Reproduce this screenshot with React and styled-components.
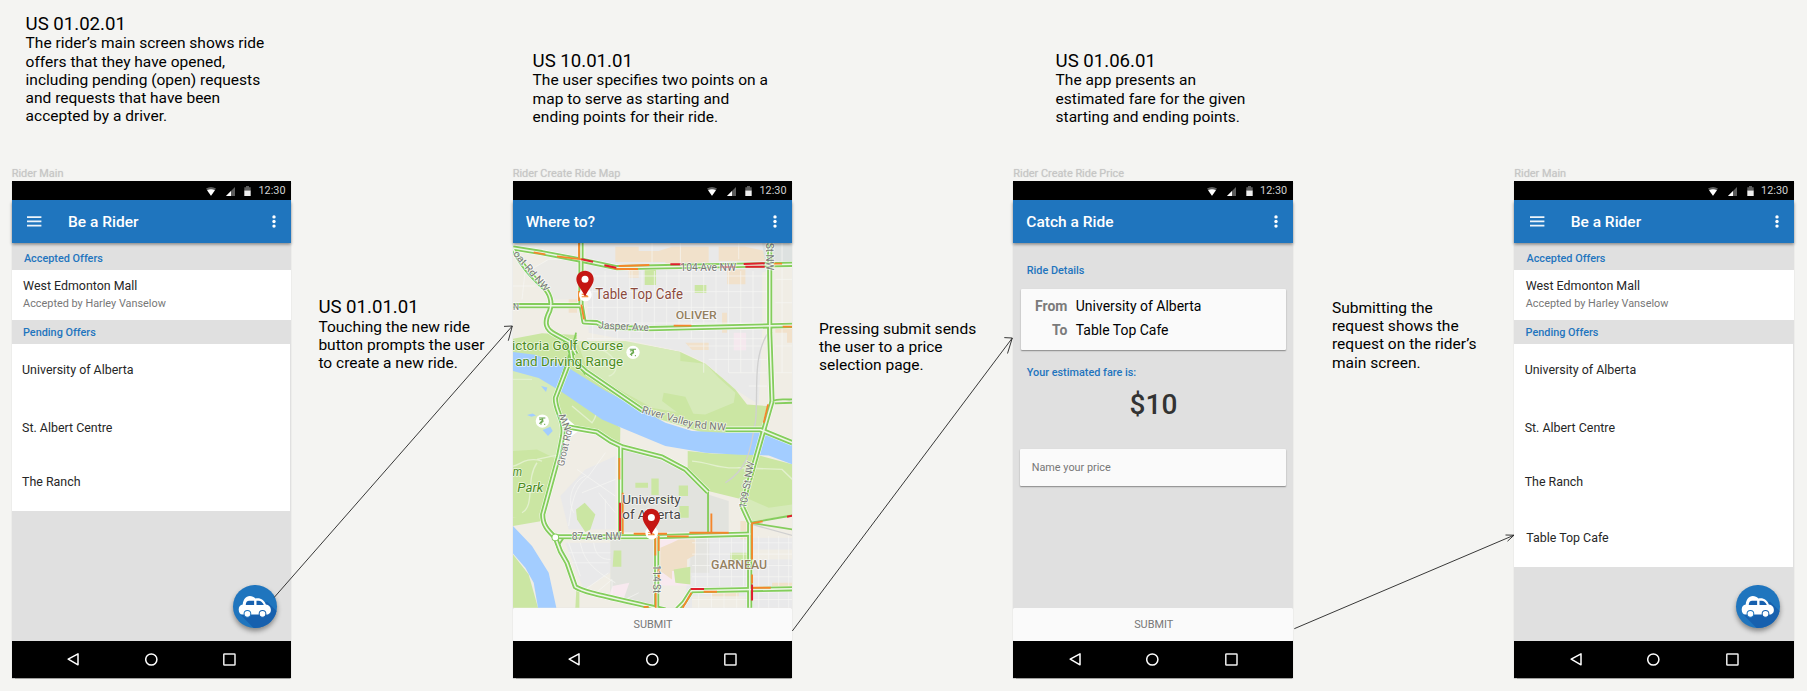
import React from "react";
import styled, { createGlobalStyle } from "styled-components";

const blue = "#1f75be";

const GlobalStyle = createGlobalStyle`
  * { box-sizing: border-box; }
  html, body { margin: 0; padding: 0; background: #f4f4f2; overflow: hidden; }
  body { font-family: Roboto, "Liberation Sans", sans-serif; }
  svg { display: block; }
`;

const Canvas = styled.main`
  position: relative;
  width: 1807px;
  height: 691px;
  overflow: hidden;
  background: #f4f4f2;
`;

/* Annotations and artboards are free items on the canvas. */
const NoteBox = styled.section`
  position: absolute;
  left: ${(p) => p.$x}px;
  top: ${(p) => p.$y}px;
  color: #000;
  font-size: 15.52px;
  line-height: 18.2px;
  white-space: pre;
`;

const NoteTitle = styled.h2`
  margin: 0;
  padding-top: 1px;
  height: 21.8px;
  font-size: 18.62px;
  font-weight: 400;
  line-height: 21.8px;
`;

const NoteText = styled.p`
  margin: 0;
`;

const Artboard = styled.article`
  position: absolute;
  left: ${(p) => p.$x}px;
  top: 167px;
  width: 279.4px;
`;

const ArtboardName = styled.div`
  height: 14.2px;
  line-height: 14px;
  font-size: 10.9px;
  color: #c6c6c5;
  white-space: nowrap;
  text-shadow: 0 0 1px rgba(190, 190, 190, 0.6);
`;

const Screen = styled.div`
  display: flex;
  flex-direction: column;
  height: 496.8px;
  background: #e0e0e0;
  box-shadow: 0 0.5px 1px rgba(0, 0, 0, 0.35);
`;

const StatusBar = styled.div`
  display: flex;
  align-items: center;
  justify-content: flex-end;
  flex: none;
  height: 18.7px;
  padding-top: 1.2px;
  padding-right: 5.6px;
  background: #000;
  color: #d2d2d2;
  font-size: 10.86px;
  line-height: 18.7px;
`;

const StatusIcons = styled.div`
  display: flex;
  align-items: center;
  gap: 9.8px;
  margin-right: 7px;
`;

const AppBar = styled.header`
  position: relative;
  z-index: 1;
  display: flex;
  align-items: center;
  flex: none;
  height: 43.5px;
  padding: 0 15.1px 0 ${(p) => (p.$menu ? "15.8px" : "13px")};
  background: ${blue};
  box-shadow: 0 1.5px 3px rgba(0, 0, 0, 0.4);
  color: #fff;
`;

const Title = styled.h1`
  flex: 1;
  margin: 0 0 0 ${(p) => (p.$menu ? "25.6px" : "0")};
  font-size: 15.52px;
  font-weight: 500;
  line-height: 20px;
`;

const Content = styled.div`
  position: relative;
  flex: 1;
  min-height: 0;
`;

const ListHeader = styled.h3`
  margin: 0;
  height: ${(p) => p.$h}px;
  padding: ${(p) => p.$top}px 0 0 ${(p) => p.$left}px;
  color: ${blue};
  font-size: 10.86px;
  font-weight: 500;
  line-height: 14px;
`;

const OfferCard = styled.div`
  height: 50px;
  padding: 8.6px 11.4px 0;
  background: #fff;
`;

const OfferName = styled.div`
  color: #262626;
  font-size: 12.42px;
  line-height: 16px;
`;

const OfferStatus = styled.div`
  margin-top: 1.4px;
  color: #777;
  font-size: 10.86px;
  line-height: 15px;
`;

const PendingList = styled.div`
  width: 278.4px;
  height: ${(p) => p.$h}px;
  padding-top: 18.2px;
  background: #fff;
`;

const PendingRow = styled.div`
  height: ${(p) => p.$h}px;
  padding-left: ${(p) => p.$left || 10.4}px;
  color: #262626;
  font-size: 12.42px;
  line-height: 16px;
`;

const Fab = styled.button`
  position: absolute;
  right: 14px;
  bottom: 12.4px;
  width: 43.6px;
  height: 43.6px;
  padding: 0;
  border: 0;
  border-radius: 50%;
  overflow: visible;
  background: ${blue};
  box-shadow: 0 3px 5px rgba(0, 0, 0, 0.4);

  svg { border-radius: 50%; }
`;

const SubmitBar = styled.button`
  flex: none;
  height: 32.5px;
  padding: 1px 0 0 1.4px;
  border: 0;
  border-radius: 1.5px;
  background: #fafafa;
  color: #777;
  font-family: inherit;
  font-size: 10.86px;
`;

const NavBar = styled.nav`
  display: flex;
  align-items: center;
  flex: none;
  gap: 65.2px;
  height: 37.3px;
  padding-left: 55.4px;
  background: #000;
`;

const SectionLabel = styled.h3`
  margin: 0;
  padding: ${(p) => p.$top}px 0 0 13.4px;
  color: ${blue};
  font-size: 10.86px;
  font-weight: 500;
  line-height: 14px;
`;

const RideCard = styled.dl`
  display: grid;
  grid-template-columns: 46.8px 1fr;
  grid-auto-rows: 23.6px;
  column-gap: 8.3px;
  width: 265.7px;
  height: 60.3px;
  margin: 11.4px 0 0 7.4px;
  padding-top: 5px;
  border-radius: 1px;
  background: #fafafa;
  box-shadow: 0 1px 1.5px rgba(0, 0, 0, 0.4);
  font-size: 13.97px;
  line-height: 24px;
`;

const RideKey = styled.dt`
  color: #7b7b7b;
  font-weight: 700;
  text-align: right;
`;

const RideValue = styled.dd`
  margin: 0;
  color: #000;
`;

const Fare = styled.div`
  margin-top: 7.8px;
  padding-left: 1px;
  color: #333;
  font-size: 28px;
  font-weight: 500;
  line-height: 34px;
  text-align: center;
`;

const PriceField = styled.div`
  width: 266px;
  height: 37px;
  margin: 27px 0 0 6.8px;
  padding-left: 11.6px;
  border-radius: 1px;
  background: #fafafa;
  box-shadow: 0 1px 1.5px rgba(0, 0, 0, 0.4);
  color: #777;
  font-size: 10.86px;
  line-height: 37px;
`;

const Arrows = styled.svg`
  position: absolute;
  inset: 0;
  pointer-events: none;
`;

const Note = ({ x, y, title, children }) => (
  <NoteBox $x={x} $y={y}>
    {title && <NoteTitle>{title}</NoteTitle>}
    <NoteText>{children}</NoteText>
  </NoteBox>
);

const WifiIcon = () => (
  <svg width="10" height="9" viewBox="0 0 10 9">
    <path d="M0 1.6Q5-1.4 10 1.6L5 8.8Z" fill="#5c5c5c" />
    <path d="M1.1 3.2Q5 1.2 8.9 3.2L5 8.8Z" fill="#fff" />
  </svg>
);

const SignalIcon = () => (
  <svg width="9" height="9" viewBox="0 0 9 9">
    <path d="M0 9 9 0V9Z" fill="#5c5c5c" />
    <path d="M0 9 5 4V9Z" fill="#fff" />
  </svg>
);

const BatteryIcon = () => (
  <svg width="7" height="10" viewBox="0 0 7 10">
    <path d="M0.3 1.2H2V0H5V1.2H6.7V5H0.3Z" fill="#5c5c5c" />
    <path d="M0.3 4.6H6.7V10H0.3Z" fill="#eee" />
  </svg>
);

const MenuIcon = () => (
  <svg width="15" height="11" viewBox="0 0 15 11">
    <path d="M0 1.1H14.4M0 5.4H14.4M0 9.7H14.4" stroke="#fff" strokeOpacity="0.92" strokeWidth="1.8" />
  </svg>
);

const MoreIcon = () => (
  <svg width="4" height="13" viewBox="0 0 4 13">
    <circle cx="2" cy="1.9" r="1.7" fill="#fff" />
    <circle cx="2" cy="6.5" r="1.7" fill="#fff" />
    <circle cx="2" cy="11.1" r="1.7" fill="#fff" />
  </svg>
);

const CarIcon = () => (
  <svg width="43.6" height="43.6" viewBox="0 0 130 130">
    <path d="M24 90 102 50 190 138 102 170Z" fill="#1760ae" />
    <path
      d="M17 73C17 64 22 59 29 58C30 45 38 33 50 33C57 33 63 36 67 40C82 37 94 45 98 58C107 59 113 65 113 74C113 84 107 88 101 88H29C21 88 17 82 17 73Z"
      fill="#fff"
    />
    <path d="M38 60C38 51 42 47 48 47H63V60Z" fill="#1760ae" />
    <path d="M70 47H76C84 47 88 52 92 60H70Z" fill="#1760ae" />
    <circle cx="43" cy="86" r="10" fill="#fff" stroke={blue} strokeWidth="3" />
    <circle cx="88" cy="86" r="10" fill="#fff" stroke="#1760ae" strokeWidth="3" />
  </svg>
);

const PhoneFrame = ({ x, name, title, menu, submit, children }) => (
  <Artboard $x={x}>
    <ArtboardName>{name}</ArtboardName>
    <Screen>
      <StatusBar>
        <StatusIcons>
          <WifiIcon />
          <SignalIcon />
          <BatteryIcon />
        </StatusIcons>
        12:30
      </StatusBar>
      <AppBar $menu={menu}>
        {menu && <MenuIcon />}
        <Title $menu={menu}>{title}</Title>
        <MoreIcon />
      </AppBar>
      <Content>{children}</Content>
      {submit && <SubmitBar>SUBMIT</SubmitBar>}
      <NavBar>
        <svg width="12.5" height="13" viewBox="0 0 12.5 13">
          <path d="M1.2 6.2 11 0.8V11.8Z" fill="none" stroke="#fff" strokeWidth="1.5" strokeLinejoin="round" />
        </svg>
        <svg width="13" height="13" viewBox="0 0 13 13">
          <circle cx="6.3" cy="6.5" r="5.6" fill="none" stroke="#fff" strokeWidth="1.5" />
        </svg>
        <svg width="13" height="13" viewBox="0 0 13 13">
          <rect x="0.8" y="0.9" width="11.2" height="11.2" rx="0.6" fill="none" stroke="#eee" strokeWidth="1.5" />
        </svg>
      </NavBar>
    </Screen>
  </Artboard>
);

const RiderMain = ({ x, offers, listHeight }) => (
  <PhoneFrame x={x} name="Rider Main" title="Be a Rider" menu>
    <ListHeader $h={26.5} $top={8.8} $left={12.2}>Accepted Offers</ListHeader>
    <OfferCard>
      <OfferName>West Edmonton Mall</OfferName>
      <OfferStatus>Accepted by Harley Vanselow</OfferStatus>
    </OfferCard>
    <ListHeader $h={23.7} $top={6} $left={11.3}>Pending Offers</ListHeader>
    <PendingList $h={listHeight}>
      {offers.map(([label, h, left]) => (
        <PendingRow key={label} $h={h} $left={left}>{label}</PendingRow>
      ))}
    </PendingList>
    <Fab aria-label="New ride"><CarIcon /></Fab>
  </PhoneFrame>
);

/* ---- Map drawing ---- */

const green = "#84cd5c";
const orange = "#f5862b";
const red = "#e01f2d";

const roads = [
  "M23 266 L110 280 230 303 335 325 480 322 861 315",
  "M227 251 V435 L236 488 275 490 300 503 430 508 861 498",
  "M23 439 H232",
  "M23 268 C50 320 80 350 110 380 C135 400 142 430 133 455 C115 490 120 510 150 525 L192 548 212 585",
  "M793 251 L793 520 800 726",
  "M192 548 L200 600 240 635 415 755",
  "M187 620 L150 716 C150 760 180 780 172 830 L160 890 112 1065 C112 1100 130 1115 150 1135 L165 1175 185 1210 210 1282 C240 1300 300 1310 440 1343 L480 1352",
  "M172 800 L240 812 275 818 315 845 350 862 470 893 540 930 608 998",
  "M660 811 H765 L861 850",
  "M346 860 V1125",
  "M150 1132 H440 L735 1124",
  "M800 726 L790 760 710 1040 735 1094",
  "M733 1094 V1345",
  "M454 1130 V1345",
  "M515 1350 L535 1330 558 1294 861 1288",
];

const thinRoads = [
  "M608 998 V1122", "M735 1090 L861 1068", "M735 1090 L861 1110",
  "M800 726 C820 715 840 722 861 720", "M808 732 L861 730",
  "M172 535 C190 590 215 610 240 645", "M212 520 C205 560 190 575 160 690",
  "M155 1165 L175 1135", "M160 890 L175 830",
];

const orangeJams = [
  "M85 279 L120 285", "M155 291 L230 300", "M300 318 L335 329 H398", "M340 320 L432 317",
  "M221 251 V296", "M228 436 L236 480", "M505 499 H558", "M805 313 H830", "M832 502 H861",
  "M788 735 L775 790", "M342 896 V960", "M352 1000 V1124", "M385 1123 H485", "M485 1131 H550",
  "M552 1120 H670", "M618 1062 V1122", "M738 1092 L772 1086", "M740 1092 V1200",
  "M450 1130 V1188", "M460 1130 V1175", "M460 1225 V1260", "M451 1300 V1345", "M532 1345 L558 1300",
  "M595 1297 H635", "M742 1285 H796", "M221 395 V425", "M740 1245 V1272", "M415 1342 H430",
];

const redJams = [
  "M228 300 L263 307", "M297 318 L333 325", "M495 315 H535", "M645 323 H690", "M715 314 L778 312",
  "M720 322 H778", "M344 1030 V1115", "M845 1072 L861 1069", "M556 1289 H596", "M740 1275 V1323",
];

const range = (from, to, step) => {
  const out = [];
  for (let v = from; v < to; v += step) out.push(v);
  return out;
};

const upperGrid = [
  ...range(262, 770, 37).map((x) => `M${x} 335V${x > 560 ? 640 : 540}`),
  ...range(350, 560, 47).map((y) => `M245 ${y}H785`),
  ...range(560, 700, 40).map((y) => `M${520 + (y - 540) * 1.5} ${y}H785`),
  "M525 251V320", "M440 251V310", "M380 335V490", "M700 251V300", "M830 251V640", "M810 360H861",
  "M810 430H861", "M810 560H861", "M810 640H861", "M60 330L50 420", "M23 380H90", "M60 340L130 300H215",
].join("");

const lowerGrid = [
  ...range(570, 725, 36).map((x) => `M${x} 1135V1280`),
  ...range(760, 861, 30).map((x) => `M${x} 1130V1345`),
  ...range(580, 725, 38).map((x) => `M${x} 1300V1345`),
  ...range(1150, 1340, 34).map((y) => `M560 ${y}H861`),
  "M190 1100C200 1020 210 980 250 950L300 880M230 1000L330 960M215 930L330 1010M205 1060C180 1010 210 960 240 950",
  "M190 1150L225 1250M225 1150C235 1200 260 1230 330 1270M265 1150C270 1190 290 1200 315 1200M190 1180H315M200 1210H310",
  "M300 1020V1110M280 1000L330 1060M240 1290L310 1240M260 1310L320 1260V1310M340 1330L400 1300",
].join("");

const MapText = ({ x, y, w, size, fill, rotate, weight, italic, children }) => (
  <text
    x={x}
    y={y}
    textLength={w}
    lengthAdjust="spacingAndGlyphs"
    fontSize={size}
    fontWeight={weight || 400}
    fontStyle={italic ? "italic" : "normal"}
    fill={fill}
    stroke="#fff"
    strokeOpacity="0.7"
    strokeWidth="5"
    strokeLinejoin="round"
    paintOrder="stroke"
    transform={rotate ? `rotate(${rotate} ${x} ${y})` : undefined}
  >
    {children}
  </text>
);

const Pin = ({ x, y }) => (
  <g transform={`translate(${x} ${y})`}>
    <circle cx="1" cy="46" r="19" fill="#fff" />
    <path d="M-10 51H10M-10 43 8 49" stroke={orange} strokeWidth="3" />
    <path d="M0-27C-15-27-26-15-26-1C-26 16-10 28 0 51C10 28 26 16 26-1C26-15 15-27 0-27Z" fill="#c51613" />
    <circle cy="-1" r="10.5" fill="#fff" />
  </g>
);

const GolfBadge = ({ x, y }) => (
  <g transform={`translate(${x} ${y})`}>
    <circle r="20" fill="#fff" />
    <path d="M-10-9H9M-9-4 1-6 2 1-4 5V11M1-4-9 8M7 8V12" fill="none" stroke="#6aa84e" strokeWidth="3" />
  </g>
);

const RideMap = () => (
  <svg width="279.4" height="364.8" viewBox="23 251 838 1094" preserveAspectRatio="none">
    <rect x="23" y="251" width="838" height="1094" fill="#f0ede5" />
    {/* city blocks */}
    <path d="M240 251H861V300L770 340V520L760 735 690 690 600 610 525 575 380 545 250 520Z" fill="#e9e9e9" />
    <path d="M23 251H215V300L120 290Z" fill="#ecebe8" />
    <path d="M75 330 130 300H215V420H140Z" fill="#ebeae6" />
    <path d="M165 1010 240 930 330 890V1110H190Z" fill="#e9e9ea" />
    <path d="M180 1150H315V1240L235 1290Z" fill="#e9e9ea" />
    <path d="M560 1135H861V1345H540V1310Z" fill="#e9e9ea" />
    <path d="M810 520H861V720H810ZM740 1170H861V1200H740ZM560 1310H720V1345H560Z" fill="#f0ede5" />
    {/* commercial areas */}
    <path
      d="M330 262H400V275H460L500 262H610V310H520V330H480V308H330ZM640 262H720L780 275V305H640ZM370 330H400V355H370ZM665 330H720V375H665ZM540 550H610V572H560ZM650 460H665V520H650ZM190 420H215V460H190Z"
      fill="#f1e1cb"
    />
    <path d="M620 1285H700V1310H620ZM800 1270H861V1295H800ZM705 1085H725V1140H705ZM810 500H861V550H845V520H810Z" fill="#f1e1cb" />
    <path d="M685 520H722V573H685Z" fill="#f5e8ee" />
    {/* university grounds */}
    <path d="M352 868 470 898 545 945 608 1005 670 1025V1118H352Z" fill="#e2e3de" />
    <path d="M315 1142H448V1345L315 1305Z" fill="#e2e3de" />
    <path d="M555 1135H612V1240H555Z" fill="#e4e4e0" />
    <path d="M465 1135H543V1170H500L465 1185ZM465 1240H500V1230H555V1278H465ZM322 1280 372 1270 355 1318 312 1305Z" fill="#f8e9ef" />
    <path d="M465 1165 500 1150 520 1140H572V1185L545 1200V1235H500V1260L465 1235Z" fill="#f0dfc8" />
    {/* parks */}
    <path
      d="M23 538 110 522 215 527V547L300 545 430 560 525 578 600 613 650 655 690 690 725 735 785 740 775 812 660 840 400 760 180 640 23 600Z"
      fill="#cbe6a3"
    />
    <path d="M215 545 360 545 525 578V605L600 613 640 655 690 700 685 730 600 765 520 760 440 745 250 640Z" fill="#d6eab9" />
    <path d="M475 700 540 712 565 765 520 762 470 725Z" fill="#cbe6a3" />
    <path d="M23 630H100L170 680 345 805 344 870 290 830 240 812 172 815 165 880 110 1080 23 1075Z" fill="#cbe6a3" />
    <path d="M23 630H100L165 690 150 720 170 830 155 900 95 870 23 875Z" fill="#d6eab9" />
    <path d="M60 1085 112 1060V1085ZM23 1075H110V1085L23 1100Z" fill="#cbe6a3" />
    <path d="M547 875 620 882 750 885 861 915V1068L735 1085 712 1020 608 995 547 930Z" fill="#cbe6a3" />
    <path d="M710 1010 735 1085 861 1065V1035L790 1045Z" fill="#d6eab9" />
    <path d="M212 1050 238 1030 270 1065 255 1110 240 1118 215 1080Z" fill="#cbe6a3" />
    <path d="M23 1185 70 1245 98 1345H23Z" fill="#cbe6a3" />
    <path d="M213 1290 222 1295V1345H210Z" fill="#cbe6a3" />
    <path d="M505 1230 555 1222V1275L510 1270ZM325 1173H348V1222H322ZM675 1180H725V1204H675ZM418 330H452V377H418ZM568 377H603V401H568Z" fill="#cbe6a3" />
    <path d="M390 970H428V985H390ZM438 957H460V1007H438ZM520 978H548V1010H520ZM522 1040H550V1075H522ZM468 1015H496V1028H468Z" fill="#cbe6a3" />
    <path d="M770 251H861V310L780 315Z" fill="#dde1e0" />
    {/* minor streets and trails */}
    <path d={upperGrid + lowerGrid} fill="none" stroke="#f6f6f4" strokeOpacity="0.8" strokeWidth="2.6" />
    <path
      d="M23 660H80M110 905C60 890 40 920 23 920M50 1060C90 1040 60 960 95 910M165 885 95 900M560 905C620 910 640 930 700 925L830 930 861 960M215 700C260 740 290 750 260 790L200 740M240 560C340 570 350 640 310 650M780 850C820 860 850 880 861 880"
      fill="none"
      stroke="#e2f0cd"
      strokeWidth="4"
    />
    {/* water */}
    <path
      d="M23 578 90 586 185 623 300 694 400 746 480 790 560 815 660 820 760 816 861 847V915L790 888 700 886 600 880 480 860 350 806 290 780 165 695 100 656 23 635Z"
      fill="#a3cdff"
    />
    <path d="M23 1100 80 1160 130 1240 153 1345H98L85 1270 60 1225 23 1182Z" fill="#a3cdff" />
    <path d="M107 680 126 684 122 698ZM65 767 82 762 92 768 78 772ZM112 812 135 802 142 815 128 830Z" fill="#a3cdff" />
    {/* railway */}
    <path d="M785 525C740 600 760 700 750 790C735 850 740 920 660 970M740 1095 861 1128" fill="none" stroke="#d0d0d0" strokeWidth="4" />
    {/* main roads with traffic */}
    {roads.map((d) => <path key={"c" + d} d={d} fill="none" stroke="#fff" strokeOpacity="0.8" strokeWidth="19" strokeLinejoin="round" />)}
    <path d="M165 760 200 790 225 812 190 835 165 870 172 820Z" fill="#fff" />
    {roads.map((d) => <path key={"g" + d} d={d} fill="none" stroke={green} strokeWidth="15.5" strokeLinejoin="round" />)}
    <path d={thinRoads.join("")} fill="none" stroke={green} strokeWidth="5.5" />
    {roads.map((d) => <path key={"w" + d} d={d} fill="none" stroke="#eef6e6" strokeWidth="4.6" strokeLinejoin="round" />)}
    <circle cx="150" cy="1134" r="10" fill="#fff" stroke={green} strokeWidth="3" />
    <path d={orangeJams.join("")} fill="none" stroke={orange} strokeWidth="5.5" />
    <path d={redJams.join("")} fill="none" stroke={red} strokeWidth="6" />
    {/* labels */}
    <MapText x={525} y={335} w={167} size={31} fill="#777">104 Ave NW</MapText>
    <MapText x={22} y={284} w={150} size={30} fill="#777" rotate={50}>oat Rd NW</MapText>
    <MapText x={23} y={451} w={18} size={29} fill="#777">N</MapText>
    <MapText x={783} y={251} w={82} size={30} fill="#777" rotate={90}>St NW</MapText>
    <MapText x={278} y={507} w={152} size={31} fill="#777" rotate={3}>Jasper Ave</MapText>
    <MapText x={511} y={479} w={123} size={34} weight={500} fill="#94805f">OLIVER</MapText>
    <MapText x={270} y={419} w={263} size={42} fill="#8c4a3c">Table Top Cafe</MapText>
    <MapText x={20} y={571} w={333} size={40} fill="#4c8c1d">ictoria Golf Course</MapText>
    <MapText x={30} y={619} w={323} size={40} fill="#4c8c1d">and Driving Range</MapText>
    <MapText x={408} y={760} w={158} size={31} fill="#777" rotate={16}>River Valley</MapText>
    <MapText x={567} y={806} w={94} size={31} fill="#777" rotate={5}>Rd NW</MapText>
    <MapText x={175} y={922} w={112} size={30} fill="#777" rotate={-77}>Groat Rd</MapText>
    <MapText x={198} y={808} w={52} size={30} fill="#777" rotate={-112}>NW</MapText>
    <MapText x={722} y={1048} w={142} size={31} fill="#777" rotate={-80}>109 St NW</MapText>
    <MapText x={22} y={950} w={28} size={40} italic fill="#4c8c1d">m</MapText>
    <MapText x={36} y={999} w={78} size={40} italic fill="#4c8c1d">Park</MapText>
    <MapText x={351} y={1033} w={175} size={41} fill="#484848">University</MapText>
    <MapText x={351} y={1080} w={175} size={41} fill="#484848">of Alberta</MapText>
    <MapText x={199} y={1142} w={150} size={31} fill="#777">87 Ave NW</MapText>
    <MapText x={444} y={1217} w={84} size={30} fill="#777" rotate={90}>114 St</MapText>
    <MapText x={617} y={1230} w={168} size={36} weight={500} fill="#94805f">GARNEAU</MapText>
    <GolfBadge x={383} y={579} />
    <GolfBadge x={111} y={785} />
    <Pin x={239} y={361} />
    <Pin x={438} y={1075} />
  </svg>
);

const FlowArrows = () => (
  <Arrows width="1807" height="691" viewBox="0 0 1807 691" fill="none" stroke="#222" strokeWidth="0.9">
    <path d="M274.3 597.3 512.3 326M504 326.4 512.3 326 508.3 340.7" />
    <path d="M792.3 631 1012.3 338M1004.3 337.6 1012.3 338 1007.5 353.5" />
    <path d="M1294.3 628.7 1514 535.2M1505.5 535 1514 535.2 1507.5 541.2" />
  </Arrows>
);

export default function App() {
  return (
    <Canvas>
      <GlobalStyle />
      <Note x={25.6} y={12.6} title="US 01.02.01">
        {"The rider’s main screen shows ride\noffers that they have opened,\nincluding pending (open) requests\nand requests that have been\naccepted by a driver."}
      </Note>
      <Note x={318.4} y={296} title="US 01.01.01">
        {"Touching the new ride\nbutton prompts the user\nto create a new ride."}
      </Note>
      <Note x={532.6} y={49.6} title="US 10.01.01">
        {"The user specifies two points on a\nmap to serve as starting and\nending points for their ride."}
      </Note>
      <Note x={819} y={319.6}>
        {"Pressing submit sends\nthe user to a price\nselection page."}
      </Note>
      <Note x={1055.6} y={49.6} title="US 01.06.01">
        {"The app presents an\nestimated fare for the given\nstarting and ending points."}
      </Note>
      <Note x={1332} y={299}>
        {"Submitting the\nrequest shows the\nrequest on the rider’s\nmain screen."}
      </Note>

      <RiderMain
        x={11.7}
        listHeight={167.3}
        offers={[["University of Alberta", 58], ["St. Albert Centre", 54.2], ["The Ranch", 20]]}
      />

      <PhoneFrame x={512.7} name="Rider Create Ride Map" title="Where to?" submit>
        <RideMap />
      </PhoneFrame>

      <PhoneFrame x={1013.3} name="Rider Create Ride Price" title="Catch a Ride" submit>
        <SectionLabel $top={20.5}>Ride Details</SectionLabel>
        <RideCard>
          <RideKey>From</RideKey>
          <RideValue>University of Alberta</RideValue>
          <RideKey>To</RideKey>
          <RideValue>Table Top Cafe</RideValue>
        </RideCard>
        <SectionLabel $top={16.2}>Your estimated fare is:</SectionLabel>
        <Fare>$10</Fare>
        <PriceField>Name your price</PriceField>
      </PhoneFrame>

      <RiderMain
        x={1514.3}
        listHeight={223.3}
        offers={[["University of Alberta", 58], ["St. Albert Centre", 54.2], ["The Ranch", 55.7], ["Table Top Cafe", 20, 12]]}
      />

      <FlowArrows />
    </Canvas>
  );
}
